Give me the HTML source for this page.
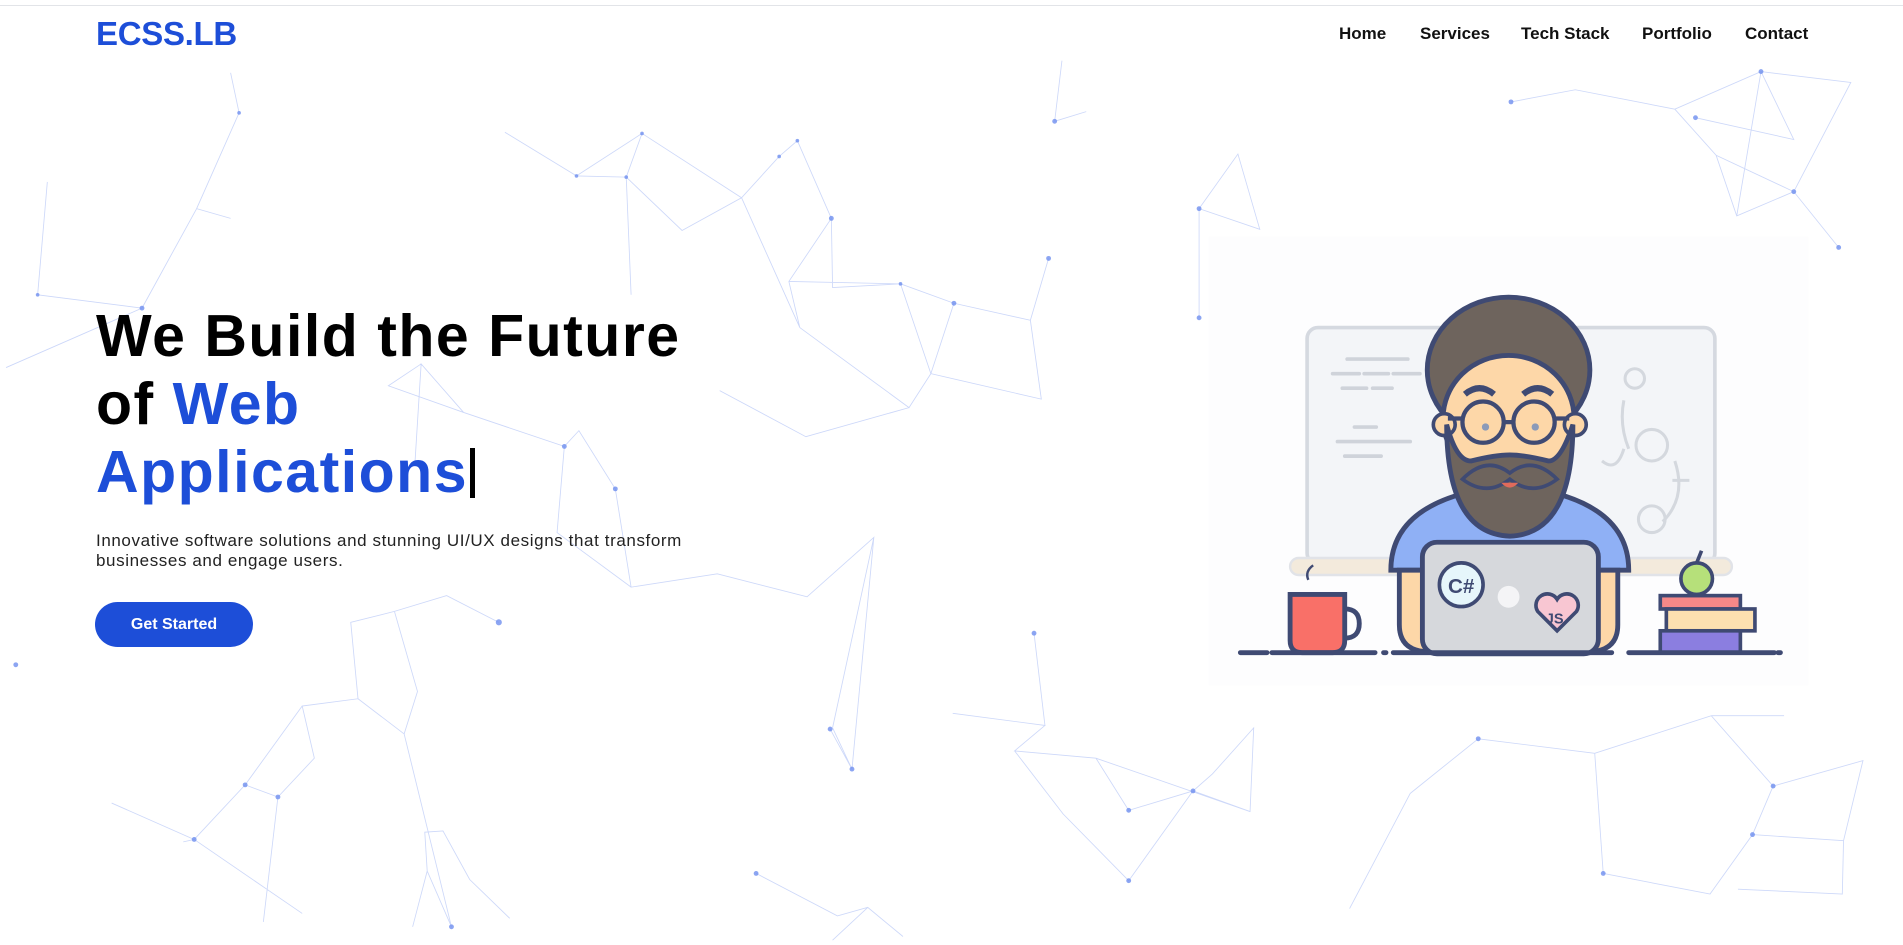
<!DOCTYPE html>
<html><head><meta charset="utf-8"><style>
html,body{margin:0;padding:0;width:1903px;height:945px;overflow:hidden;background:#fff;font-family:"Liberation Sans",sans-serif;}
#bg{position:absolute;left:0;top:0;width:1903px;height:945px;}
.top{position:absolute;left:0;top:5px;width:1903px;height:1px;background:#e2e4e8;}
.logo{position:absolute;left:96px;top:15px;font-size:33px;font-weight:700;color:#1d4ed8;letter-spacing:-0.3px;}
.nav{position:absolute;top:24px;font-size:17px;font-weight:600;color:#111;}
h1{position:absolute;left:96px;top:302px;margin:0;font-size:59px;line-height:68px;font-weight:700;color:#000;letter-spacing:1.5px;}
h1 span{color:#1d4ed8;}
.cursor{display:inline-block;width:5px;height:50px;background:#000;vertical-align:-6px;margin-left:2px;}
p{position:absolute;left:96px;top:531px;margin:0;width:600px;font-size:17px;line-height:20px;color:#222;letter-spacing:0.6px;}
.btn{position:absolute;left:95px;top:602px;width:158px;height:45px;border-radius:23px;background:#1d4ed8;color:#fff;font-size:16px;font-weight:700;text-align:center;line-height:45px;}
</style></head><body>
<svg id="bg" viewBox="0 0 1568 779" preserveAspectRatio="none">
<g stroke="#6f8fef" stroke-width="0.7" fill="none" opacity="0.35">
<path d="M197,93 L190,60 M197,93 L162,172 L190,180 M162,172 L117,254 L31,243 M31,243 L39,150 M117,254 L5,303 M416,109 L475,145 L529,110 L516,146 L562,190 L611,163 L642,129 L657,116 L685,180 L650,232 L659,270 L611,163 M475,145 L516,146 L520,243 M529,110 L611,163 M685,180 L686,237 L742,234 L786,250 L849,264 L864,213 M650,232 L742,234 L767,308 L749,336 L659,270 M786,250 L767,308 M849,264 L858,329 L767,308 M593,322 L664,360 L749,336 M869,100 L875,50 M869,100 L895,92 M988,172 L1020,127 L1038,189 L988,172 M988,262 L988,172 M1245,84 L1298,74 L1380,90 L1451,59 L1525,68 L1478,158 L1431,178 L1414,128 L1380,90 M1397,97 L1478,115 L1451,59 M1414,128 L1478,158 L1515,204 M1431,178 L1451,59"/>
<path d="M347,300 L320,318 L382,340 L465,368 L477,355 L507,403 L520,484 L591,473 L665,492 L720,443 L686,600 L702,634 M465,368 L459,439 L520,484 M382,340 L347,300 L342,380 M411,513 L368,491 L325,504 L289,513 L295,576 L333,605 L344,570 L325,504 M295,576 L249,582 L259,625 L229,657 L202,647 L160,692 L92,662 M229,657 L217,760 M249,582 L202,647 M333,605 L372,764 L352,718 L350,686 L365,685 L387,725 L420,757 M352,718 L340,764 M249,753 L160,692 L151,694 M785,588 L861,598 L836,619 L903,625 L930,668 L983,652 L999,638 L1033,600 L1030,669 L983,652 L930,726 L876,671 L836,619 M903,625 L1030,669 M852,522 L861,598 M1218,609 L1314,621 L1410,590 L1461,648 L1444,688 L1409,737 L1321,720 L1314,621 M1461,648 L1535,627 L1519,693 L1444,688 M1410,590 L1470,590 M1519,693 L1518,737 L1432,733 M1162,654 L1218,609 M1112,749 L1162,654 M623,720 L690,755 L715,748 L744,772 L715,748 L686,775 M684,601 L702,634 L720,443"/>
</g>
<g fill="#6f8fef" opacity="0.8">
<circle cx="197" cy="93" r="1.5"/><circle cx="117" cy="254" r="2"/><circle cx="31" cy="243" r="1.5"/><circle cx="475" cy="145" r="1.5"/><circle cx="516" cy="146" r="1.5"/><circle cx="529" cy="110" r="1.5"/><circle cx="642" cy="129" r="1.5"/><circle cx="657" cy="116" r="1.5"/><circle cx="685" cy="180" r="2"/><circle cx="742" cy="234" r="1.5"/><circle cx="786" cy="250" r="2"/><circle cx="864" cy="213" r="2"/><circle cx="869" cy="100" r="2"/><circle cx="988" cy="172" r="2"/><circle cx="988" cy="262" r="2"/><circle cx="1245" cy="84" r="2"/><circle cx="1451" cy="59" r="2"/><circle cx="1397" cy="97" r="2"/><circle cx="1478" cy="158" r="2"/><circle cx="1515" cy="204" r="2"/><circle cx="411" cy="513" r="2.5"/><circle cx="465" cy="368" r="2"/><circle cx="507" cy="403" r="2"/><circle cx="202" cy="647" r="2"/><circle cx="229" cy="657" r="2"/><circle cx="160" cy="692" r="2"/><circle cx="13" cy="548" r="2"/><circle cx="684" cy="601" r="2"/><circle cx="702" cy="634" r="2"/><circle cx="930" cy="668" r="2"/><circle cx="983" cy="652" r="2"/><circle cx="930" cy="726" r="2"/><circle cx="1218" cy="609" r="2"/><circle cx="1461" cy="648" r="2"/><circle cx="1444" cy="688" r="2"/><circle cx="1321" cy="720" r="2"/><circle cx="623" cy="720" r="2"/><circle cx="372" cy="764" r="2"/><circle cx="852" cy="522" r="2"/>
</g>
<rect x="996" y="195" width="494" height="370" fill="#fdfdfe"/>
<rect x="1077" y="270" width="336" height="195" rx="9" fill="#f3f5f8" stroke="#d5d9e0" stroke-width="3"/>
<g stroke="#cfd3da" stroke-width="3" stroke-linecap="round">
<path d="M1110,296h50M1098,308h22M1124,308h20M1148,308h22M1106,320h20M1131,320h16M1116,352h18M1102,364h60M1108,376h30"/>
</g>
<g stroke="#d4d8de" stroke-width="2.5" fill="none"><circle cx="1347" cy="312" r="8"/><circle cx="1361" cy="367" r="13"/><circle cx="1361" cy="428" r="11"/><path d="M1338,330 q-4,20 4,40 M1380,380 q10,30 -10,50 M1320,380 q12,10 18,-10 M1378,396h14"/></g>
<rect x="1063" y="460" width="364" height="14" rx="7" fill="#f3eadc" stroke="#e1e3e8" stroke-width="2"/>
<path d="M1082,466 q-7,5 -4,12" stroke="#3f4a73" stroke-width="2" fill="none"/>
<path d="M1146,470 q0,-60 98,-70 q98,10 98,70 z" fill="#8fb0f5" stroke="#3f4a73" stroke-width="4"/>
<path d="M1153,470 v45 q0,20 20,22 h140 q20,-2 20,-22 v-45 z" fill="#fdd7a8" stroke="#3f4a73" stroke-width="4"/>
<ellipse cx="1243" cy="305" rx="67" ry="60" fill="#6e645d" stroke="#3f4a73" stroke-width="4"/>
<ellipse cx="1243" cy="345" rx="54" ry="52" fill="#fdd7a8" stroke="#3f4a73" stroke-width="4"/>
<circle cx="1190" cy="350" r="9" fill="#fdd7a8" stroke="#3f4a73" stroke-width="3"/>
<circle cx="1298" cy="350" r="9" fill="#fdd7a8" stroke="#3f4a73" stroke-width="3"/>
<path d="M1192,350 q0,90 52,92 q52,-2 52,-92 q-10,30 -20,30 q-20,-5 -32,-5 q-12,0 -32,5 q-12,0 -20,-30z" fill="#6e645d" stroke="#3f4a73" stroke-width="4"/>
<path d="M1205,395 q20,-20 39,-5 q19,-15 39,5 q-20,15 -39,0 q-19,15 -39,0z" fill="#6e645d" stroke="#3f4a73" stroke-width="3"/>
<path d="M1237,398 q7,8 14,0" fill="#e06b5b"/>
<g fill="none" stroke="#3f4a73" stroke-width="3.5"><circle cx="1222" cy="348" r="17"/><circle cx="1264" cy="348" r="17"/><path d="M1239,348h8M1205,345h-12M1281,345h12"/><path d="M1207,325 q12,-10 24,0 M1255,325 q12,-10 24,0" stroke-width="5"/></g>
<circle cx="1224" cy="352" r="3" fill="#8b9ab8"/><circle cx="1265" cy="352" r="3" fill="#8b9ab8"/>
<rect x="1172" y="447" width="145" height="92" rx="12" fill="#d6d8dc" stroke="#3f4a73" stroke-width="4"/>
<circle cx="1204" cy="482" r="18" fill="#e6f6fb" stroke="#3f4a73" stroke-width="3"/>
<text x="1204" y="489" font-family="Liberation Sans" font-weight="700" font-size="17" fill="#3f4a73" text-anchor="middle">C#</text>
<circle cx="1243" cy="492" r="9" fill="#f4f4f6"/>
<path d="M1283,520 l-16,-16 a9,9 0 0 1 16,-10 a9,9 0 0 1 16,10z" fill="#f8c6d2" stroke="#3f4a73" stroke-width="3"/>
<text x="1281" y="514" font-family="Liberation Sans" font-weight="700" font-size="12" fill="#3f4a73" text-anchor="middle">JS</text>
<path d="M1063,490 h45 v38 q0,10 -10,10 h-25 q-10,0 -10,-10z" fill="#f97068" stroke="#3f4a73" stroke-width="4"/>
<path d="M1108,502 q12,0 12,12 q0,12 -12,12" fill="none" stroke="#3f4a73" stroke-width="4"/>
<rect x="1368" y="491" width="66" height="11" fill="#f68888" stroke="#3f4a73" stroke-width="3"/>
<rect x="1373" y="502" width="73" height="18" fill="#fde0b0" stroke="#3f4a73" stroke-width="3"/>
<rect x="1368" y="520" width="66" height="18" fill="#8b7ee0" stroke="#3f4a73" stroke-width="3"/>
<circle cx="1398" cy="477" r="13" fill="#b6e07a" stroke="#3f4a73" stroke-width="3"/>
<path d="M1398,464 l4,-10" stroke="#3f4a73" stroke-width="3"/>
<path d="M1022,538h22M1048,538h85M1140,538h2M1148,538h180M1342,538h120M1465,538h2" stroke="#3f4a73" stroke-width="4" stroke-linecap="round"/>
</svg>
<div class="top"></div>
<div class="logo">ECSS.LB</div>
<div class="nav" style="left:1339px">Home</div>
<div class="nav" style="left:1420px">Services</div>
<div class="nav" style="left:1521px">Tech Stack</div>
<div class="nav" style="left:1642px">Portfolio</div>
<div class="nav" style="left:1745px">Contact</div>
<h1>We Build the Future<br>of <span>Web</span><br><span>Applications</span><i class="cursor"></i></h1>
<p>Innovative software solutions and stunning UI/UX designs that transform businesses and engage users.</p>
<div class="btn">Get Started</div>
</body></html>
